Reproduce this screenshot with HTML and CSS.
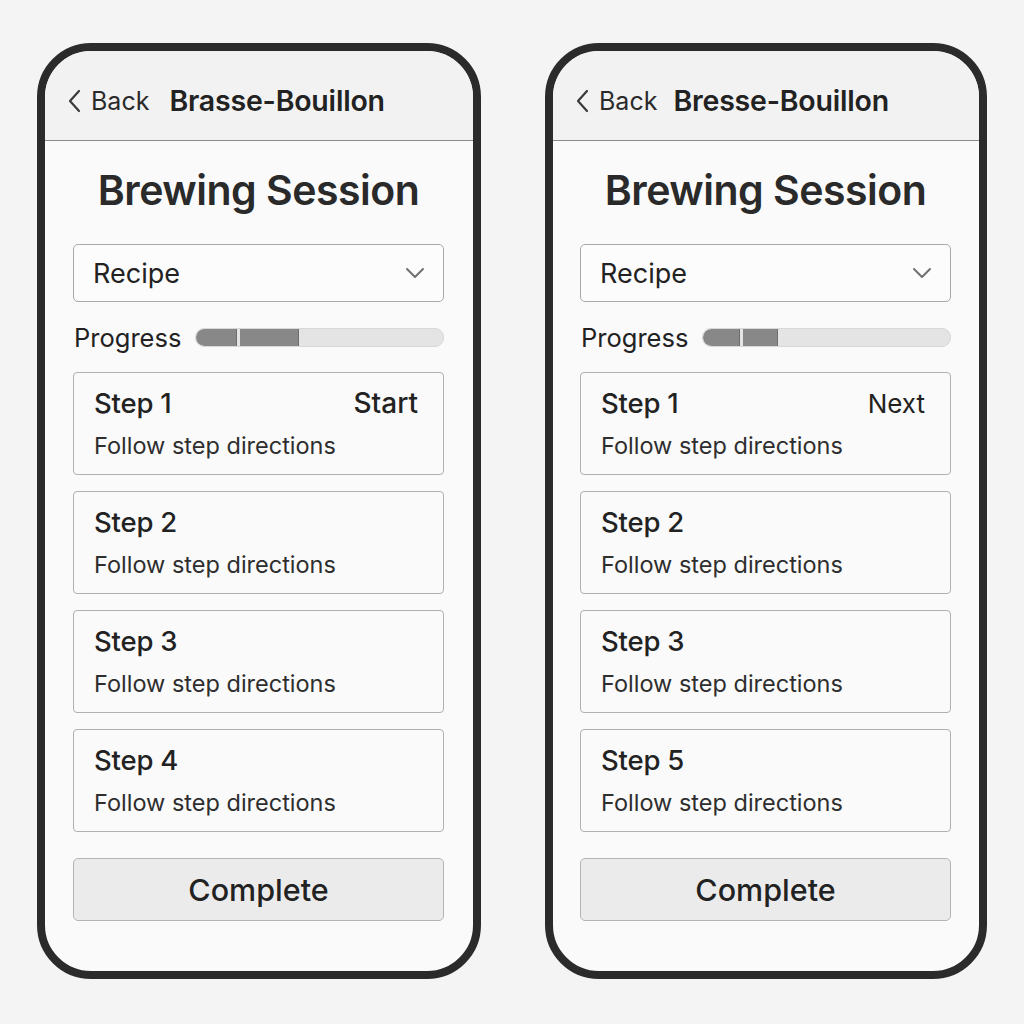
FILE: index.html
```html
<!DOCTYPE html>
<html>
<head>
<meta charset="utf-8">
<link rel="stylesheet" href="styles.css">
</head>
<body>
<div class="stage">
  <div class="phone">
    <div class="header">
      <span class="back"><svg class="chev" width="14" height="24" viewBox="0 0 14 24"><path d="M12 2 L3 12 L12 22" fill="none" stroke="#3a3a3a" stroke-width="2.2" stroke-linecap="round" stroke-linejoin="round"/></svg>Back</span>
      <span class="app">Brasse-Bouillon</span>
    </div>
    <div class="content">
      <h1 class="title">Brewing Session</h1>
      <div class="select"><span>Recipe</span><svg width="20" height="12" viewBox="0 0 20 12"><path d="M2 2 L10 10 L18 2" fill="none" stroke="#707070" stroke-width="2" stroke-linecap="round" stroke-linejoin="round"/></svg></div>
      <div class="progress">
        <span class="plabel">Progress</span>
        <div class="bar">
          <div class="seg seg-a" style="width:40px"></div>
          <div class="seg" style="width:58px"></div>
        </div>
      </div>
      <div class="card"><div class="row"><span class="step">Step 1</span><span class="action strong">Start</span></div><div class="desc">Follow step directions</div></div>
      <div class="card"><div class="row"><span class="step">Step 2</span></div><div class="desc">Follow step directions</div></div>
      <div class="card"><div class="row"><span class="step">Step 3</span></div><div class="desc">Follow step directions</div></div>
      <div class="card"><div class="row"><span class="step">Step 4</span></div><div class="desc">Follow step directions</div></div>
      <div class="complete">Complete</div>
    </div>
  </div>
  <div class="phone phone-b">
    <div class="header">
      <span class="back"><svg class="chev" width="14" height="24" viewBox="0 0 14 24"><path d="M12 2 L3 12 L12 22" fill="none" stroke="#3a3a3a" stroke-width="2.2" stroke-linecap="round" stroke-linejoin="round"/></svg>Back</span>
      <span class="app">Bresse-Bouillon</span>
    </div>
    <div class="content">
      <h1 class="title">Brewing Session</h1>
      <div class="select"><span>Recipe</span><svg width="20" height="12" viewBox="0 0 20 12"><path d="M2 2 L10 10 L18 2" fill="none" stroke="#707070" stroke-width="2" stroke-linecap="round" stroke-linejoin="round"/></svg></div>
      <div class="progress">
        <span class="plabel">Progress</span>
        <div class="bar">
          <div class="seg seg-a" style="width:36px"></div>
          <div class="seg" style="width:34px"></div>
        </div>
      </div>
      <div class="card"><div class="row"><span class="step">Step 1</span><span class="action">Next</span></div><div class="desc">Follow step directions</div></div>
      <div class="card"><div class="row"><span class="step">Step 2</span></div><div class="desc">Follow step directions</div></div>
      <div class="card"><div class="row"><span class="step">Step 3</span></div><div class="desc">Follow step directions</div></div>
      <div class="card"><div class="row"><span class="step">Step 5</span></div><div class="desc">Follow step directions</div></div>
      <div class="complete">Complete</div>
    </div>
  </div>
</div>
</body>
</html>
```
FILE: styles.css
```css
html, body {
  margin: 0;
  padding: 0;
  background: #f4f4f4;
  font-family: Inter, "Noto Sans", "Liberation Sans", sans-serif;
  color: #222;
}
.stage {
  display: flex;
  gap: 64px;
  padding: 43px 0 0 37px;
}
.phone {
  width: 444px;
  height: 936px;
  box-sizing: border-box;
  border: 8px solid #2b2b2b;
  border-radius: 54px;
  overflow: hidden;
  background: #fafafa;
  display: flex;
  flex-direction: column;
}
.phone-b {
  width: 442px;
}
.header {
  height: 79px;
  background: #f2f2f2;
  border-bottom: 1px solid #8a8a8a;
  display: flex;
  align-items: center;
  padding: 10px 0 0 22px;
  box-sizing: content-box;
}
.back {
  display: flex;
  align-items: center;
  font-size: 25px;
  color: #2a2a2a;
  font-weight: 400;
}
.chev {
  margin-right: 10px;
}
.app {
  margin-left: 20px;
  font-size: 28.5px;
  font-weight: 600;
  color: #222;
  letter-spacing: -0.2px;
}
.phone-b .app {
  margin-left: 16px;
}
.content {
  padding: 25px 29px 0 28px;
  display: flex;
  flex-direction: column;
}
.phone-b .content {
  padding: 25px 28px 0 27px;
}
.title {
  margin: 0;
  text-align: center;
  font-size: 41px;
  line-height: 48px;
  font-weight: 600;
  color: #2a2a2a;
  letter-spacing: -0.5px;
}
.select {
  margin-top: 30px;
  height: 58px;
  box-sizing: border-box;
  border: 1.5px solid #a8a8a8;
  border-radius: 5px;
  background: #fcfcfc;
  display: flex;
  align-items: center;
  justify-content: space-between;
  padding: 0 18px 0 19px;
  font-size: 27px;
  color: #222;
}
.progress {
  margin-top: 22px;
  height: 26px;
  display: flex;
  align-items: center;
}
.plabel {
  font-size: 25.5px;
  color: #222;
  margin-left: 1px;
  width: 121px;
}
.bar {
  flex: 1;
  height: 17px;
  border-radius: 9px;
  background: #e4e4e4;
  border: 1px solid #d8d8d8;
  overflow: hidden;
  display: flex;
  gap: 3px;
}
.seg {
  height: 100%;
  background: #888;
  border-right: 1px solid #6e6e6e;
}
.seg-a {
  border-radius: 9px 0 0 9px;
}
.card {
  margin-top: 22px;
  height: 103px;
  box-sizing: border-box;
  border: 1.5px solid #b0b0b0;
  border-radius: 4px;
  background: #fafafa;
  padding: 15px 25px 0 20px;
}
.card + .card {
  margin-top: 16px;
}
.row {
  display: flex;
  justify-content: space-between;
  align-items: center;
  height: 30px;
}
.step {
  font-size: 27.5px;
  font-weight: 500;
  color: #222;
  letter-spacing: -0.2px;
}
.action {
  font-size: 26px;
  color: #222;
}
.action.strong {
  font-size: 28px;
  font-weight: 500;
}
.desc {
  margin-top: 14px;
  font-size: 23.5px;
  line-height: 28px;
  color: #2e2e2e;
}
.complete {
  margin-top: 26px;
  height: 63px;
  box-sizing: border-box;
  border: 1.5px solid #b4b4b4;
  border-radius: 5px;
  background: #ebebeb;
  display: flex;
  align-items: center;
  justify-content: center;
  font-size: 30.5px;
  font-weight: 500;
  color: #222;
}
```
